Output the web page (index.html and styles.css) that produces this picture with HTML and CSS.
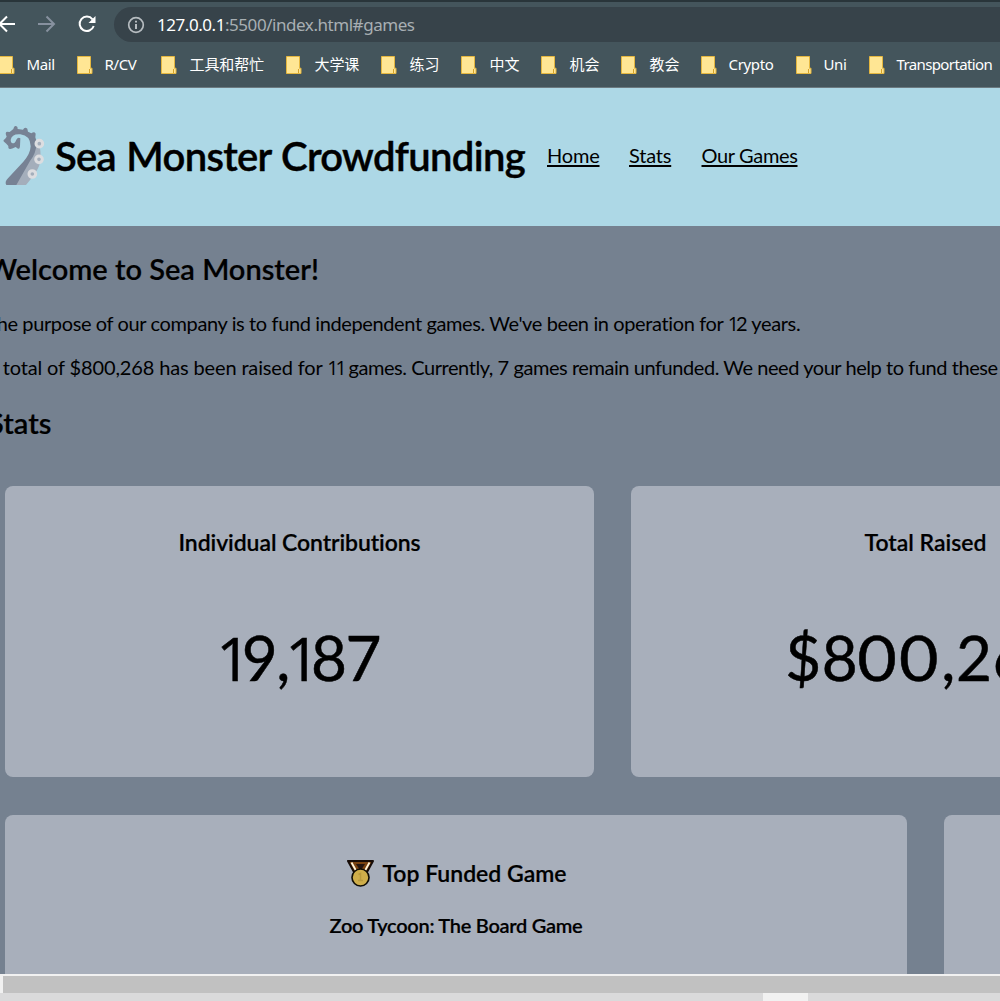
FILE: index.html
```html
<!DOCTYPE html>
<html lang="en">
<head>
<meta charset="utf-8">
<title>Sea Monster Crowdfunding</title>
<link rel="stylesheet" href="styles.css">
</head>
<body>
<svg class="defs" width="0" height="0"><defs>
  <symbol id="folder" viewBox="0 0 16 18"><path d="M.5.5h13v11.7h1.5v5.3H.5z" fill="#ffe694" stroke="#e5b73f"/><path d="M12.5 17v-4" stroke="#d5a129" fill="none"/></symbol>
</defs></svg>
<div class="browser">
  <div class="toolbar">
    <svg class="arrows" width="114" height="36" viewBox="0 0 114 36" fill="none" stroke="#fff" stroke-width="2">
      <path d="M15 18H0M7 10.500L-.5 18 7 25.500"/>
      <path d="M38 18h15.500M46.500 10.500L54 18l-7.500 7.500" stroke="#87919f"/>
      <path d="M92.500 13.300A7.200 7.200 0 1 0 93.700 20"/><path d="M95.500 10v7h-7z" fill="#fff" stroke="none"/>
    </svg>
    <div class="address">
      <svg width="18" height="18" viewBox="0 0 18 18" fill="none" stroke="#b6bcc0" stroke-width="1.700"><circle cx="9" cy="9" r="7.300"/><path d="M9 8v5M9 4.800v1.800" stroke-width="2"/></svg>
      <span class="url"><b>127.0.0.1</b>:5500/index.html#games</span>
    </div>
  </div>
  <div class="bookmarks">
    <span class="mark w78"><svg><use href="#folder"/></svg><span>Mail</span></span>
    <span class="mark w84"><svg><use href="#folder"/></svg><span>R/CV</span></span>
    <span class="mark w125"><svg><use href="#folder"/></svg><span class="cjk">工具和帮忙</span></span>
    <span class="mark w95"><svg><use href="#folder"/></svg><span class="cjk">大学课</span></span>
    <span class="mark w80"><svg><use href="#folder"/></svg><span class="cjk">练习</span></span>
    <span class="mark w80"><svg><use href="#folder"/></svg><span class="cjk">中文</span></span>
    <span class="mark w80"><svg><use href="#folder"/></svg><span class="cjk">机会</span></span>
    <span class="mark w80"><svg><use href="#folder"/></svg><span class="cjk">教会</span></span>
    <span class="mark w95"><svg><use href="#folder"/></svg><span>Crypto</span></span>
    <span class="mark w73"><svg><use href="#folder"/></svg><span>Uni</span></span>
    <span class="mark"><svg><use href="#folder"/></svg><span class="long">Transportation</span></span>
  </div>
</div>
<div class="page">
  <header>
    <svg class="logo" width="47" height="63" viewBox="0 39 141 189">
      <path d="M110 90Q122 105 122 140Q122 168 104 190Q94 207 78 225H42L86 155Q108 130 103 90z" fill="#a4aebb"/>
      <path d="M19 225Q13 216 24 205L70 155Q91 132 92 109Q91 76 61 73Q35 71 32 90Q33 104 44 98Q47 95 49 89Q54 80 61 85L60 109Q59 120 52 115L47 111Q35 117 31 117Q24 118 25 108Q19 100 13 96Q7 91 15 87L20 80Q14 66 21 65L29 66L40 57Q42 46 48 48Q54 50 53 57L69 59Q74 50 82 56L84 65L94 70Q103 63 107 71L106 82Q114 101 104 129Q100 140 90 153L49 225z" fill="#778294"/>
      <g fill="#a4aebb" stroke="#dcdde0" stroke-width="9"><circle cx="118" cy="101" r="10"/><circle cx="117" cy="148" r="10"/><circle cx="97" cy="192" r="10"/></g>
    </svg>
    <h1>Sea Monster Crowdfunding</h1>
    <nav><span class="home"><a>Home</a></span><span class="stat"><a>Stats</a></span><a>Our Games</a></nav>
  </header>
  <main>
    <h2 class="welcome">Welcome to Sea Monster!</h2>
    <p class="purpose">The purpose of our company is to fund independent games. We've been in operation for <span class="one">1</span>2 years.</p>
    <p class="total">A total of $800,268 has been raised for <span class="one">11</span><span class="rest"> games. Currently, 7 games remain unfunded. We need your help to fund these</span></p>
    <h2 class="stats">Stats</h2>
    <div class="row counts">
      <section class="card"><h3 class="indiv">Individual Contributions</h3><div class="num count"><span class="one">1</span>9<span class="comma">,</span><span class="one">1</span>87</div></section>
      <section class="card"><h3>Total Raised</h3><div class="num money">$8<span class="zeros">00</span>,268</div></section>
    </div>
    <div class="row tops">
      <section class="card">
        <h3><svg class="medal" width="27" height="27" viewBox="0 0 27 27"><path d="M1 1h25l-6 11H7z" fill="#794311" stroke="#160c07" stroke-width="2" stroke-linejoin="round"/><path d="M4.500 2.500l5 9M22.500 2.500l-5 9" stroke="#fff5dc" stroke-width="1.800"/><path d="M9 4h9l-4.500 7z" fill="#241510"/><circle cx="13.500" cy="17.500" r="8.500" fill="#cfae4a" stroke="#100d05" stroke-width="1.600"/><path d="M11.500 14.500l2-1v7m-2.500 0h5" fill="none" stroke="#b99a3d" stroke-width="1.500"/></svg><span>Top Funded Game</span></h3>
        <p class="zoo">Zoo Tycoon: The Board Game</p>
      </section>
      <section class="card"></section>
    </div>
  </main>
</div>
<footer><div class="track"></div><div class="under"><i></i></div></footer>
</body>
</html>
```
FILE: styles.css
```css
* { box-sizing: border-box; }
body { margin: 0; width: 1000px; height: 1001px; overflow: hidden; display: flex; flex-direction: column; font-family: Lato, sans-serif; color: #000; background: #758190; }
.defs { position: absolute; }
.browser { height: 88px; flex: none; background: #44555c; border-top: 2px solid #29353a; border-bottom: 1px solid #6c7a80; font-family: "Noto Sans", "Noto Sans CJK SC", sans-serif; color: #fff; }
.toolbar { display: flex; height: 40px; padding-top: 5px; }
.arrows { flex: none; margin-top: -1px; }
.address { display: flex; align-items: center; width: 920px; flex: none; height: 35px; padding-left: 13px; border-radius: 18px; background: #37434a; }
.url { margin-left: 12px; font-size: 17px; letter-spacing: -.45px; color: #a8afb3; white-space: nowrap; }
.url b { font-weight: 400; color: #fff; }
.bookmarks { display: flex; height: 45px; margin-left: -1px; align-items: center; font-size: 15px; letter-spacing: -.35px; white-space: nowrap; }
.mark { display: flex; align-items: center; flex: none; height: 24px; }
.mark span { padding-bottom: 2px; }
.mark svg { width: 16px; height: 18px; margin-right: 11.5px; }
.mark .cjk { letter-spacing: -.1px; padding-left: 1px; }
.long { letter-spacing: -.62px; }
.w73 { width: 73px; } .w78 { width: 78px; } .w80 { width: 80px; } .w84 { width: 84px; } .w95 { width: 95px; } .w125 { width: 125px; }
.page { height: 886px; flex: none; overflow: hidden; white-space: nowrap; }
header { height: 138px; padding-bottom: 3px; background: #add8e6; display: flex; align-items: center; }
.logo { margin-top: -2px; flex: none; }
h1, h2, h3, p { margin: 0; font-weight: 600; }
h1, h2, h3, .zoo { -webkit-text-stroke: .2px #000; }
h1 { width: 468px; margin: 0 24px 0 8px; font-size: 40px; line-height: 48px; letter-spacing: -.68px; word-spacing: 1px; -webkit-text-stroke-width: .4px; }
nav { display: flex; font-size: 20px; letter-spacing: -.35px; padding-bottom: 2px; }
nav a { text-decoration: underline; text-decoration-thickness: 2px; text-underline-offset: 2px; }
.home { width: 82px; letter-spacing: -.2px; } .stat { width: 72.5px; letter-spacing: -.2px; }
main { padding: 24px 0 0; }
h2 { font-size: 29px; line-height: 38px; }
.welcome { margin-left: -13px; }
p { font-size: 20px; line-height: 24px; font-weight: 400; }
.one { font-family: "Open Sans", sans-serif; font-size: .98em; letter-spacing: -.15em; line-height: 1; }
.purpose { margin: 23px 0 0 -14.6px; letter-spacing: -.38px; }
.total { margin: 20px 0 0 -15px; letter-spacing: -.14px; }
.rest { letter-spacing: -.44px; }
.stats { margin: 25px 0 0 -12px; }
.row { display: grid; gap: 37px; margin-left: 5px; }
.counts { grid-template-columns: 589px 589px; margin-top: 44px; }
.tops { grid-template-columns: 902px 300px; margin-top: 38px; }
.card { background: #a8afbb; border-radius: 8px; text-align: center; padding-top: 41px; }
.counts .card { height: 291px; }
.tops .card { height: 200px; padding-top: 43px; }
h3 { font-size: 23px; line-height: 30px; display: flex; justify-content: center; align-items: center; }
.indiv { letter-spacing: -.08px; }
.num { font-size: 62px; line-height: 80px; margin-top: 60px; -webkit-text-stroke: .5px #000; }
.count { letter-spacing: -1.5px; padding-right: 3px; }
.comma { letter-spacing: -5px; }
.money { letter-spacing: .6px; }
.zeros { display: inline-block; transform: scaleX(1.1); letter-spacing: 2px; margin: 0 4px 0 3px; }
.medal { margin: 0 8px 0 2px; }
.zoo { font-weight: 600; margin-top: 25px; letter-spacing: -.28px; }
footer { flex: none; height: 27px; background: #f1f1f1; padding-top: 2px; }
.track { height: 17px; margin-left: 3px; background: #c1c1c1; }
.under { height: 8px; background: #dadadb; }
.under i { display: block; width: 45px; height: 8px; margin-left: 763px; background: #f1f1f1; }
```
